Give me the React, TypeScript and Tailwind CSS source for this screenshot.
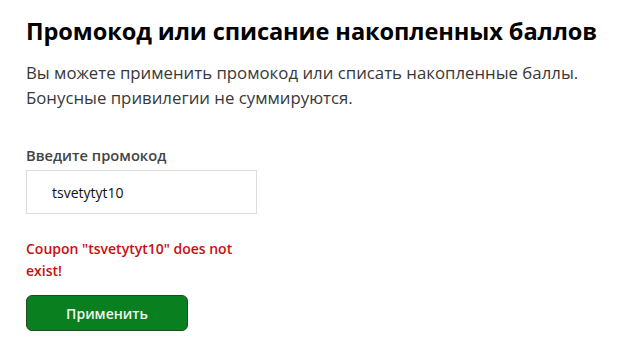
import React, { useState } from 'react';

const App: React.FC = () => {
  const [code, setCode] = useState('tsvetytyt10');

  return (
    <div className="min-h-screen bg-white px-[26px] pt-[13px] font-['Open_Sans','Noto_Sans',sans-serif]">
      <h1 className="whitespace-nowrap text-[23.6px] font-bold leading-[36px] tracking-[-0.1px] text-black">
        Промокод или списание накопленных баллов
      </h1>
      <p className="mt-[11px] whitespace-nowrap text-[16.8px] leading-[25px] text-[#383838]">
        Вы можете применить промокод или списать накопленные баллы.
        <br />
        Бонусные привилегии не суммируются.
      </p>

      <div className="mt-[35px] w-[231px]">
        <label className="block text-[14.7px] font-semibold leading-[20px] text-[#444]">
          Введите промокод
        </label>
        <input
          type="text"
          value={code}
          onChange={(e) => setCode(e.target.value)}
          className="mt-[5px] h-[44px] w-full border border-[#dcdcdc] bg-white px-[25px] text-[14px] text-[#111] outline-none"
        />
        <p className="mt-[24px] text-[14px] font-semibold leading-[22px] text-[#c80f0f]">
          Coupon "tsvetytyt10" does not exist!
        </p>
        <button className="mt-[13px] h-[36px] w-[162px] rounded-[6px] border border-[#1d4d22] bg-[#0a7f1f] text-[14px] font-semibold text-[#eef7ee]">
          Применить
        </button>
      </div>
    </div>
  );
};

export default App;
